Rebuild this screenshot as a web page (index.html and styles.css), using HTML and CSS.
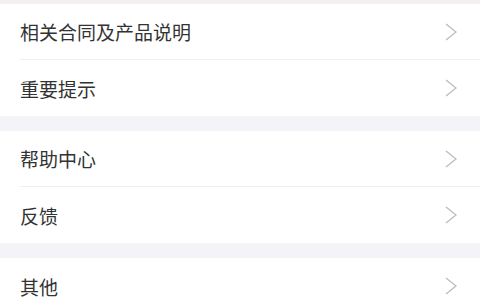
FILE: index.html
```html
<!DOCTYPE html>
<html lang="zh-CN">
<head>
<meta charset="utf-8">
<link rel="stylesheet" href="styles.css">
</head>
<body>
<div class="page">
  <div class="gap top"></div>
  <div class="group">
    <div class="row"><span class="label">相关合同及产品说明</span><svg class="chev" viewBox="0 0 12 18"><path d="M1 1 L11 9 L1 17"/></svg></div>
    <div class="row"><span class="label">重要提示</span><svg class="chev" viewBox="0 0 12 18"><path d="M1 1 L11 9 L1 17"/></svg></div>
  </div>
  <div class="gap"></div>
  <div class="group">
    <div class="row"><span class="label">帮助中心</span><svg class="chev" viewBox="0 0 12 18"><path d="M1 1 L11 9 L1 17"/></svg></div>
    <div class="row"><span class="label">反馈</span><svg class="chev" viewBox="0 0 12 18"><path d="M1 1 L11 9 L1 17"/></svg></div>
  </div>
  <div class="gap"></div>
  <div class="group">
    <div class="row"><span class="label">其他</span><svg class="chev" viewBox="0 0 12 18"><path d="M1 1 L11 9 L1 17"/></svg></div>
  </div>
</div>
</body>
</html>
```
FILE: styles.css
```css
html, body {
  margin: 0;
  padding: 0;
  background: #ffffff;
}
.page {
  width: 480px;
  height: 300px;
  overflow: hidden;
  display: flex;
  flex-direction: column;
  font-family: "Noto Sans CJK SC", "Noto Sans", sans-serif;
}
.gap {
  height: 15px;
  background: #f4f4f8;
  flex-shrink: 0;
}
.gap.top {
  height: 4px;
  background: #f3eef2;
}
.group {
  background: #fff;
  padding-left: 20px;
  flex-shrink: 0;
}
.row {
  height: 56px;
  display: flex;
  align-items: center;
  justify-content: space-between;
  padding-right: 23px;
  box-sizing: border-box;
  border-bottom: 1px solid #efeff2;
}
.row:last-child {
  border-bottom: none;
}
.label {
  font-size: 19px;
  color: #333333;
  letter-spacing: 0;
}
.chev {
  width: 12px;
  height: 18px;
  fill: none;
  stroke: #bdbdc0;
  stroke-width: 1.4;
}
```
